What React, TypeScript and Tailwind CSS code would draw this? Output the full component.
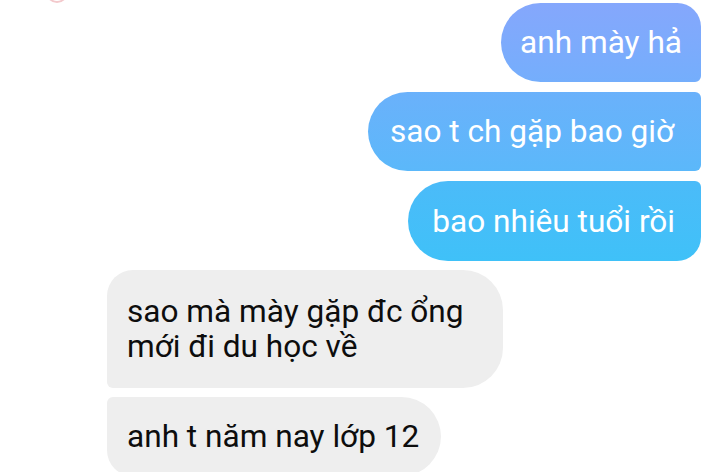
import React from "react";

const font = { fontFamily: "Roboto, 'Noto Sans', sans-serif" };

export default function App() {
  return (
    <div
      className="w-[720px] h-[472px] overflow-hidden bg-white flex flex-col"
      style={font}
    >
      <div className="h-[3px] shrink-0 overflow-hidden flex">
        <div className="ml-[46px] w-[22px] h-[22px] -mt-[19px] rounded-full border-2 border-[#f3c9cc]" />
      </div>
      <div className="shrink-0 flex flex-col items-end pr-[19px] gap-[10px]">
        <div className="shrink-0 h-[79px] flex items-center px-[19px] text-white text-[31.6px] leading-[35px] rounded-l-[40px] rounded-tr-[24px] rounded-br-[6px] bg-gradient-to-b from-[#85a7fc] to-[#74aefc]">
          anh mày hả
        </div>
        <div className="shrink-0 h-[79px] flex items-center pl-[22px] pr-[27px] text-white text-[31.6px] leading-[35px] rounded-l-[40px] rounded-r-[6px] bg-gradient-to-b from-[#6ab1fb] to-[#5bb8fa]">
          sao t ch gặp bao giờ
        </div>
        <div className="shrink-0 h-[80px] flex items-center pl-[24px] pr-[26px] text-white text-[31.6px] leading-[35px] rounded-l-[40px] rounded-tr-[6px] rounded-br-[24px] bg-gradient-to-b from-[#4bbbf9] to-[#3fc1f8]">
          bao nhiêu tuổi rồi
        </div>
      </div>
      <div className="shrink-0 flex flex-col items-start pl-[107px] gap-[9px] mt-[9px]">
        <div className="shrink-0 w-[396px] h-[118px] flex items-center px-[20px] text-[#0d0d0d] text-[31.6px] leading-[35px] rounded-tl-[26px] rounded-bl-[6px] rounded-r-[40px] bg-[#eeeeee]">
          sao mà mày gặp đc ổng mới đi du học về
        </div>
        <div className="shrink-0 h-[79px] flex items-center pl-[20px] pr-[22px] text-[#0d0d0d] text-[31.6px] leading-[35px] rounded-tl-[6px] rounded-bl-[26px] rounded-r-[40px] bg-[#eeeeee]">
          anh t năm nay lớp 12
        </div>
      </div>
    </div>
  );
}
